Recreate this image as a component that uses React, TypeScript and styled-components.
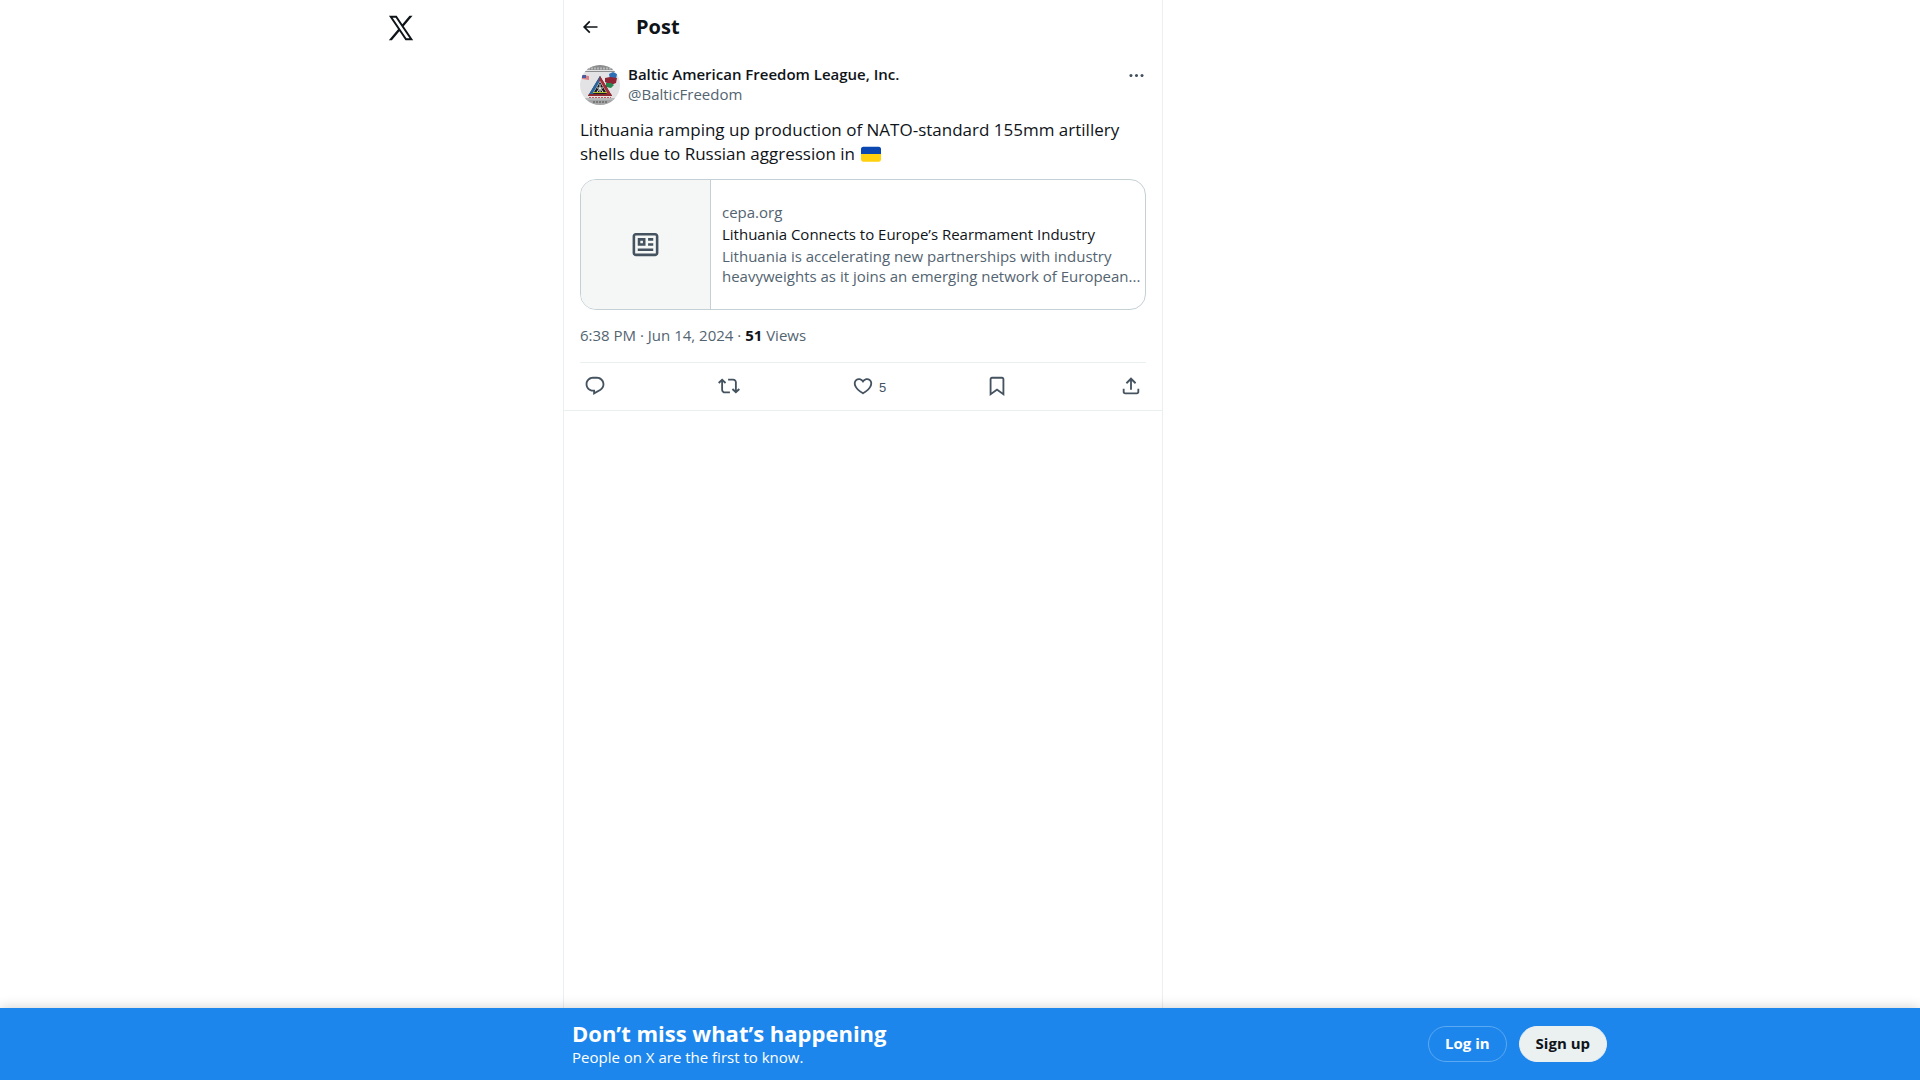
import React from "react";
import styled, { createGlobalStyle } from "styled-components";

const ink = "#0f1419";
const muted = "#536471";
const slate = "#44535f";
const hairline = "#eaefef";

const GlobalStyle = createGlobalStyle`
  *, *::before, *::after { box-sizing: border-box; }
  body {
    margin: 0;
    background: #fff;
    color: ${ink};
    font-family: "Open Sans", "Liberation Sans", sans-serif;
    font-size: 15px;
    line-height: 20px;
  }
  h1, h2, p { margin: 0; }
  a { color: inherit; text-decoration: none; }
  button { font: inherit; color: inherit; cursor: pointer; }
`;

const Page = styled.div`
  display: flex;
  flex-direction: column;
  min-height: 100vh;
`;

const Shell = styled.div`
  flex: 1;
  display: flex;
  width: 100%;
  max-width: 1294px;
  margin: 0 auto;
`;

const SideNav = styled.header`
  width: 250px;
  padding: 2px 0 0 62px;
`;

const LogoLink = styled.a`
  display: flex;
  align-items: center;
  justify-content: center;
  width: 52px;
  height: 52px;
`;

const Column = styled.main`
  flex: 0 1 600px;
  border: solid ${hairline};
  border-width: 0 1px;
`;

const TopBar = styled.div`
  display: flex;
  align-items: center;
  height: 53px;
  padding: 0 16px;
`;

const Title = styled.h1`
  font-size: 20px;
  line-height: 24px;
  font-weight: 700;
`;

const BackSlot = styled.div`
  display: flex;
  width: 56px;
`;

const IconButton = styled.button`
  display: flex;
  align-items: center;
  gap: 5px;
  padding: 0;
  border: 0;
  background: none;
  color: ${(p) => p.color || slate};
`;

const Article = styled.article`
  padding: 11px 16px 0;
  border-bottom: 1px solid ${hairline};
`;

const Author = styled.div`
  display: flex;
  gap: 8px;
  height: 41px;
`;

const AvatarLink = styled.a`
  display: flex;
  align-items: flex-end;
`;

const Names = styled.div`
  flex: 1;
  display: flex;
  flex-direction: column;
  align-items: flex-start;
`;

const Name = styled.a`
  font-weight: 600;
`;

const Handle = styled.a`
  color: ${muted};
`;

const MoreSlot = styled.div`
  display: flex;
  height: 22px;
`;

const Body = styled.p`
  margin-top: 13px;
  font-size: 17px;
  line-height: 24px;
`;

const Flag = styled.svg`
  width: 20px;
  height: 20px;
  margin: 0 2px;
  vertical-align: -4px;
`;

const Card = styled.a`
  display: flex;
  min-height: 131px;
  margin-top: 13px;
  border: 1px solid #c4d0d5;
  border-radius: 16px;
  overflow: hidden;
`;

const CardMedia = styled.div`
  flex: 0 0 130px;
  display: flex;
  align-items: center;
  justify-content: center;
  background: #f5f7f7;
  border-right: 1px solid #c4d0d5;
  color: ${slate};
`;

const CardText = styled.div`
  flex: 1;
  min-width: 0;
  display: flex;
  flex-direction: column;
  justify-content: center;
  gap: 2px;
  padding: 10px 0 12px 11px;
`;

const CardLine = styled.div<{ $strong?: boolean }>`
  color: ${(p) => (p.$strong ? ink : muted)};
`;

const Meta = styled.div`
  padding: 15px 0 17px;
  color: ${muted};
  border-bottom: 1px solid ${hairline};

  strong { color: ${ink}; font-weight: 700; }
`;

const Actions = styled.div`
  display: flex;
  height: 47px;
  padding-bottom: 1px;
`;

const Action = styled.div<{ $last?: boolean }>`
  flex: ${(p) => (p.$last ? "0 0 30px" : "1")};
  display: flex;
  align-items: center;
  padding: 0 4px;
`;

const Count = styled.span`
  padding-top: 3px;
  font-family: "Liberation Sans", Arial, sans-serif;
  font-size: 13px;
  line-height: 16px;
`;

const SignupBar = styled.footer`
  position: sticky;
  bottom: 0;
  background: #1d86ec;
  box-shadow: 0 0 12px rgba(0, 0, 0, 0.2);
`;

const BarInner = styled.div`
  display: flex;
  align-items: center;
  justify-content: space-between;
  max-width: 1294px;
  height: 72px;
  margin: 0 auto;
  padding-left: 259px;
  color: #fff;
`;

const BarText = styled.div`
  padding-bottom: 2px;
`;

const BarTitle = styled.h2`
  font-size: 22px;
  line-height: 28px;
  font-weight: 700;
`;

const BarButtons = styled.div`
  display: flex;
  gap: 12px;
`;

const Pill = styled.button<{ $solid?: boolean }>`
  height: 36px;
  padding: 0 16px 2px;
  border: 1px solid ${(p) => (p.$solid ? "#ebf0f1" : "#5aa9f2")};
  border-radius: 18px;
  background: ${(p) => (p.$solid ? "#ebf0f1" : "transparent")};
  color: ${(p) => (p.$solid ? ink : "#fff")};
  font-weight: 700;
`;

const paths = {
  logo: "M21.742 21.75l-7.563-11.179 7.056-8.321h-2.456l-5.691 6.714-4.54-6.714H2.359l7.29 10.776L2.25 21.75h2.456l6.035-7.118 4.818 7.118h6.191-.008zM7.739 3.818L18.81 20.182h-2.447L5.29 3.818h2.447z",
  back: "M7.414 13l5.043 5.04-1.414 1.42L3.586 12l7.457-7.46 1.414 1.42L7.414 11H21v2H7.414z",
  more: "M3 12c0-1.1.9-2 2-2s2 .9 2 2-.9 2-2 2-2-.9-2-2zm9 2c1.1 0 2-.9 2-2s-.9-2-2-2-2 .9-2 2 .9 2 2 2zm7 0c1.1 0 2-.9 2-2s-.9-2-2-2-2 .9-2 2 .9 2 2 2z",
  news: "M1.998 5.5c0-1.38 1.119-2.5 2.5-2.5h15c1.381 0 2.5 1.12 2.5 2.5v13c0 1.38-1.119 2.5-2.5 2.5h-15c-1.381 0-2.5-1.12-2.5-2.5v-13zm2.5-.5c-.276 0-.5.22-.5.5v13c0 .28.224.5.5.5h15c.276 0 .5-.22.5-.5v-13c0-.28-.224-.5-.5-.5h-15zM6 7h6v6H6V7zm2 2v2h2V9H8zm10 0h-4V7h4v2zm0 4h-4v-2h4v2zm-.002 4h-12v-2h12v2z",
  reply: "M1.751 10c0-4.42 3.584-8 8.005-8h4.366c4.49 0 8.129 3.64 8.129 8.13 0 2.96-1.607 5.68-4.196 7.11l-8.054 4.46v-3.69h-.067c-4.49.1-8.183-3.51-8.183-8.01zm8.005-6c-3.317 0-6.005 2.69-6.005 6 0 3.37 2.77 6.08 6.138 6.01l.351-.01h1.761v2.3l5.087-2.81c1.951-1.08 3.163-3.13 3.163-5.36 0-3.39-2.744-6.13-6.129-6.13H9.756z",
  repost: "M4.5 3.88l4.432 4.14-1.364 1.46L5.5 7.55V16c0 1.1.896 2 2 2H13v2H7.5c-2.209 0-4-1.79-4-4V7.55L1.432 9.48.068 8.02 4.5 3.88zM16.5 6H11V4h5.5c2.209 0 4 1.79 4 4v8.45l2.068-1.93 1.364 1.46-4.432 4.14-4.432-4.14 1.364-1.46 2.068 1.93V8c0-1.1-.896-2-2-2z",
  like: "M16.697 5.5c-1.222-.06-2.679.51-3.89 2.16l-.805 1.09-.806-1.09C9.984 6.01 8.526 5.44 7.304 5.5c-1.243.07-2.349.78-2.91 1.91-.552 1.12-.633 2.78.479 4.82 1.074 1.97 3.257 4.27 7.129 6.61 3.87-2.34 6.052-4.64 7.126-6.61 1.111-2.04 1.03-3.7.477-4.82-.561-1.13-1.666-1.84-2.908-1.91zm4.187 7.69c-1.351 2.48-4.001 5.12-8.379 7.67l-.503.3-.504-.3c-4.379-2.55-7.029-5.19-8.382-7.67-1.36-2.5-1.41-4.86-.514-6.67.887-1.79 2.647-2.91 4.601-3.01 1.651-.09 3.368.56 4.798 2.01 1.429-1.45 3.146-2.1 4.796-2.01 1.954.1 3.714 1.22 4.601 3.01.896 1.81.846 4.17-.514 6.67z",
  bookmark: "M4 4.5C4 3.12 5.119 2 6.5 2h11C18.881 2 20 3.12 20 4.5v18.44l-8-5.71-8 5.71V4.5zM6.5 4c-.276 0-.5.22-.5.5v14.56l6-4.29 6 4.29V4.5c0-.28-.224-.5-.5-.5h-11z",
  share: "M12 2.59l5.7 5.7-1.41 1.42L13 6.41V16h-2V6.41l-3.3 3.3-1.41-1.42L12 2.59zM21 15l-.02 3.51c0 1.38-1.12 2.49-2.5 2.49H5.5C4.11 21 3 19.88 3 18.5V15h2v3.5c0 .28.22.5.5.5h12.98c.28 0 .5-.22.5-.5L19 15h2z",
};

function Icon({ name, size }: { name: keyof typeof paths; size: number }) {
  return (
    <svg width={size} height={size} viewBox="0 0 24 24" fill="currentColor" aria-hidden="true">
      <path d={paths[name]} />
    </svg>
  );
}

function Avatar() {
  return (
    <svg width="40" height="40" viewBox="0 0 40 40" role="img" aria-label="Baltic American Freedom League">
      <clipPath id="round"><circle cx="20" cy="20" r="20" /></clipPath>
      <g clipPath="url(#round)">
        <rect width="40" height="40" fill="#e3e3e5" />
        <rect width="40" height="5" fill="#8b8c8d" />
        <path d="M8 3.500h24" stroke="#b8b8b8" strokeWidth="2" strokeDasharray="2 1" />
        <path d="M4 6.500h32M4 34h32" stroke="#8b8d8f" strokeWidth="1" />
        <rect y="35" width="40" height="5" fill="#a5a6a7" />
        <path d="M13 37h14" stroke="#777" strokeWidth="2" strokeDasharray="2 1" />
        <path d="M2 10l7 1v4l-7-1z" fill="#d98389" />
        <path d="M2 10h4v3H2z" fill="#4b5b9c" />
        <path d="M29 9l4-2 4 2-1 5-6 0z" fill="#2c6fb6" />
        <path d="M25 13l5-1 7 1-1 5-5 2-6-3z" fill="#8f2435" />
        <path d="M26 18l5 0 3 2-3 3-5-1z" fill="#28854c" />
        <path d="M20 11L8 31h24z" fill="#171c25" />
        <path d="M20 11L8 31h4l9-16z" fill="#2865a0" />
        <path d="M20 11l12 20h-4l-9-15z" fill="#a52d38" />
        <path d="M20 16l-7 12h14z" fill="#f0f0e8" />
        <path d="M20 17l-6 10h12z" fill="#17191b" />
        <path d="M20 19v8M17 23h6M17 27l3-4 3 4" stroke="#eee" strokeWidth="1" fill="none" />
        <path d="M13 27h14v1H13z" fill="#b5be30" />
        <path d="M9 29h22l1 2H8z" fill="#8f2930" />
        <path d="M9 32.500h22" stroke="#c05a60" strokeWidth="1" strokeDasharray="2 1" />
      </g>
    </svg>
  );
}

const actions: { icon: keyof typeof paths; label: string; count?: number }[] = [
  { icon: "reply", label: "Reply" },
  { icon: "repost", label: "Repost" },
  { icon: "like", label: "Like", count: 5 },
  { icon: "bookmark", label: "Bookmark" },
  { icon: "share", label: "Share post" },
];

export default function App() {
  return (
    <Page>
      <GlobalStyle />
      <Shell>
        <SideNav>
          <LogoLink href="#" aria-label="X">
            <Icon name="logo" size={30} />
          </LogoLink>
        </SideNav>
        <Column>
          <TopBar>
            <BackSlot>
              <IconButton aria-label="Back" color={ink}>
                <Icon name="back" size={20} />
              </IconButton>
            </BackSlot>
            <Title>Post</Title>
          </TopBar>
          <Article>
            <Author>
              <AvatarLink href="#">
                <Avatar />
              </AvatarLink>
              <Names>
                <Name href="#">Baltic American Freedom League, Inc.</Name>
                <Handle href="#">@BalticFreedom</Handle>
              </Names>
              <MoreSlot>
                <IconButton aria-label="More">
                  <Icon name="more" size={19} />
                </IconButton>
              </MoreSlot>
            </Author>
            <Body>
              Lithuania ramping up production of NATO-standard 155mm artillery shells due to Russian
              aggression in{" "}
              <Flag viewBox="0 0 36 36" role="img" aria-label="Flag of Ukraine">
                <path fill="#0a47b0" d="M32 5H4C1.790 5 0 6.790 0 9v9h36V9c0-2.210-1.790-4-4-4z" />
                <path fill="#ffd00d" d="M36 28c0 2.210-1.790 4-4 4H4c-2.210 0-4-1.790-4-4V18h36v10z" />
              </Flag>
            </Body>
            <Card href="#">
              <CardMedia>
                <Icon name="news" size={31} />
              </CardMedia>
              <CardText>
                <CardLine>cepa.org</CardLine>
                <CardLine $strong>Lithuania Connects to Europe’s Rearmament Industry</CardLine>
                <CardLine>
                  Lithuania is accelerating new partnerships with industry heavyweights as it joins an
                  emerging network of European...
                </CardLine>
              </CardText>
            </Card>
            <Meta>
              6:38 PM · Jun 14, 2024 · <strong>51</strong> Views
            </Meta>
            <Actions>
              {actions.map((a) => (
                <Action key={a.icon} $last={a.icon === "share"}>
                  <IconButton aria-label={a.label}>
                    <Icon name={a.icon} size={22} />
                    {a.count !== undefined && <Count>{a.count}</Count>}
                  </IconButton>
                </Action>
              ))}
            </Actions>
          </Article>
        </Column>
      </Shell>
      <SignupBar>
        <BarInner>
          <BarText>
            <BarTitle>Don’t miss what’s happening</BarTitle>
            <p>People on X are the first to know.</p>
          </BarText>
          <BarButtons>
            <Pill>Log in</Pill>
            <Pill $solid>Sign up</Pill>
          </BarButtons>
        </BarInner>
      </SignupBar>
    </Page>
  );
}
